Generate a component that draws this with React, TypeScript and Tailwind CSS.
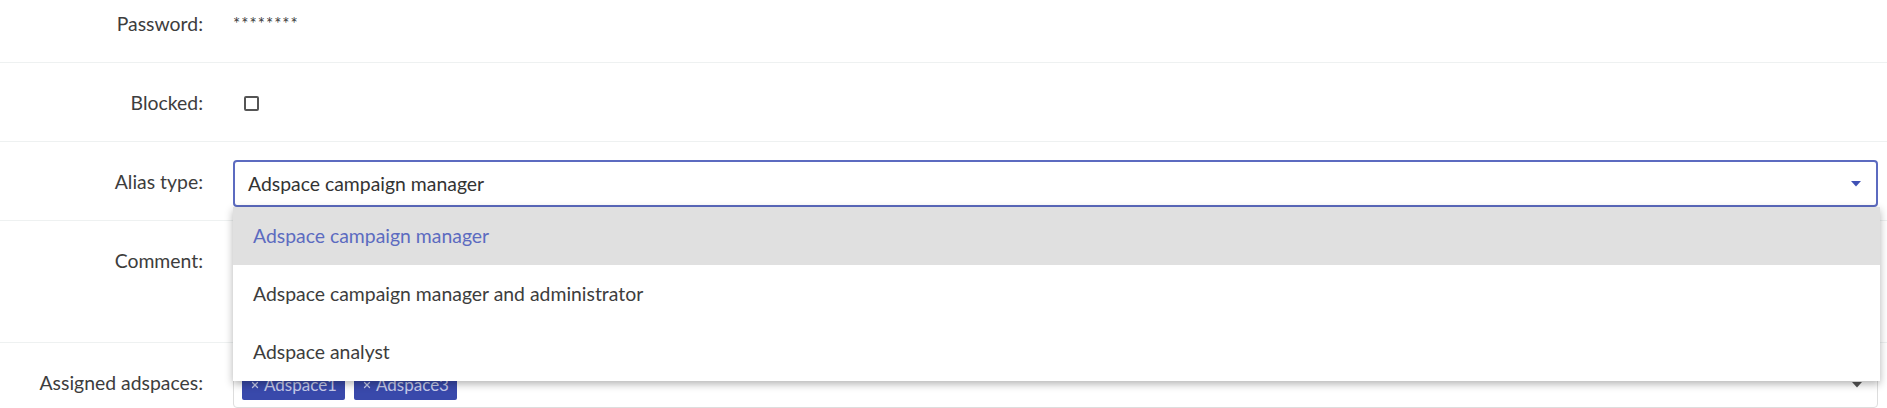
import { X } from "lucide-react";

const font = { fontFamily: "Lato, 'Noto Sans', sans-serif" };

function Row({ label, children, tall }: { label: string; children: React.ReactNode; tall?: boolean }) {
  return (
    <div
      className={`flex items-start border-b border-[#eef1f1] ${tall ? "h-[122px]" : "h-[79px]"}`}
    >
      <div className="w-[203px] shrink-0 pt-[29px] text-right text-[19.4px] leading-[22px] text-[#3d3d3d]">
        {label}
      </div>
      <div className="ml-[30px] mr-[9px] flex-1 pt-[18px]">{children}</div>
    </div>
  );
}

function Caret({ color }: { color: string }) {
  return (
    <svg width="10" height="6" viewBox="0 0 10 6">
      <path d="M0 0h10L5 5.5z" fill={color} />
    </svg>
  );
}

const options = [
  "Adspace campaign manager",
  "Adspace campaign manager and administrator",
  "Adspace analyst",
];

export default function App() {
  return (
    <div className="relative h-[408px] w-full overflow-hidden bg-white" style={font}>
      <div className="-mt-[16px]">
        <Row label="Password:">
          <div className="pt-[12px] text-[17px] leading-[20px] tracking-[1px] text-[#3d3d3d]">********</div>
        </Row>
        <Row label="Blocked:">
          <div className="pt-[15px]">
            <div className="ml-[11px] h-[15px] w-[15px] rounded-[2px] border-2 border-[#555] bg-white" />
          </div>
        </Row>
        <Row label="Alias type:">
          <div className="relative">
            <div className="flex h-[47px] items-center justify-between rounded-[4px] border-2 border-[#5c6bc0] pl-[13px] pr-[15px] text-[19.4px] text-[#333]">
              <span>Adspace campaign manager</span>
              <Caret color="#3f51b5" />
            </div>
            <ul className="absolute left-0 right-[-2px] top-[47px] z-10 bg-white shadow-[0_3px_8px_rgba(0,0,0,0.3)]">
              {options.map((o, i) => (
                <li
                  key={o}
                  className={`flex h-[58px] items-center pl-[20px] text-[19.4px] ${
                    i === 0 ? "bg-[#e0e0e0] text-[#5c6bc0]" : "text-[#3d3d3d]"
                  }`}
                >
                  {o}
                </li>
              ))}
            </ul>
          </div>
        </Row>
        <Row label="Comment:" tall>
          <div className="h-[86px] rounded-[4px] border border-[#ddd]" />
        </Row>
        <Row label="Assigned adspaces:">
          <div className="flex h-[47px] items-center justify-between rounded-[4px] border border-[#ddd] pl-[8px] pr-[15px]">
            <div className="flex gap-[9px]">
              {["Adspace1", "Adspace3"].map((a) => (
                <span
                  key={a}
                  className="flex h-[30px] items-center gap-[4px] rounded-[2px] bg-[#3949ab] px-[8px] text-[17px] text-[#c5cae9]"
                >
                  <X size={10} strokeWidth={3} />
                  {a}
                </span>
              ))}
            </div>
            <Caret color="#555" />
          </div>
        </Row>
      </div>
    </div>
  );
}
